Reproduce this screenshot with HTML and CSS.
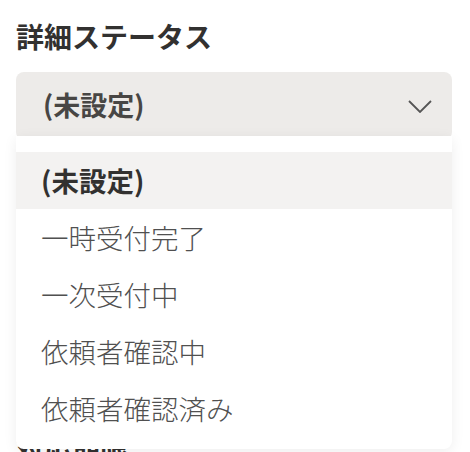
FILE: index.html
```html
<!DOCTYPE html>
<html lang="ja">
<head>
  <meta charset="UTF-8">
  <meta name="viewport" content="width=device-width, initial-scale=1.0">
  <title>詳細ステータス</title>
  <link rel="stylesheet" href="styles.css">
</head>
<body>
  <div class="form">
    <div class="field">
      <label class="field-label">詳細ステータス</label>
      <div class="select">
        <span class="select-value">(未設定)</span>
        <svg class="chevron" viewBox="0 0 24 13">
          <path d="M1 1l11 11 11-11"></path>
        </svg>
      </div>

      <!-- Open dropdown list -->
      <ul class="dropdown">
        <li class="option selected">(未設定)</li>
        <li class="option">一時受付完了</li>
        <li class="option">一次受付中</li>
        <li class="option">依頼者確認中</li>
        <li class="option">依頼者確認済み</li>
      </ul>
    </div>

    <div class="field next-field">
      <label class="field-label">対応期限</label>
    </div>
  </div>
</body>
</html>
```

FILE: styles.css
```css
body {
  font-family: "Noto Sans CJK JP", "Noto Sans", sans-serif;
  margin: 0;
  padding: 0;
  background: #fff;
  color: #323130;
}
.form {
  padding: 16px 18px 0 16px;
}
.field {
  position: relative;
}
.field-label {
  display: block;
  font-size: 28px;
  font-weight: bold;
  line-height: 40px;
  color: #323130;
  margin-bottom: 16px;
}
.select {
  height: 68px;
  background: #edebe9;
  border-radius: 8px;
  display: flex;
  align-items: center;
  justify-content: space-between;
  padding: 0 20px 0 27px;
  box-sizing: border-box;
}
.select-value {
  font-size: 27px;
  font-weight: 600;
  color: #484644;
  margin-top: -3px;
}
.chevron {
  width: 24px;
  height: 13px;
  fill: none;
  stroke: #555;
  stroke-width: 1.8;
}
.dropdown {
  position: absolute;
  top: 120px;
  left: 0;
  right: 0;
  z-index: 2;
  list-style: none;
  margin: 0;
  padding: 16px 0 12px;
  background: #fff;
  border-radius: 0 0 8px 8px;
  box-shadow: 0 3px 14px rgba(0, 0, 0, 0.07);
}
.option {
  height: 57px;
  line-height: 57px;
  padding-left: 25px;
  font-size: 27.5px;
  font-weight: 300;
  color: #505050;
}
.option.selected {
  background: #f3f2f1;
  font-weight: bold;
  color: #323130;
}
.next-field {
  margin-top: 288px;
}
```
